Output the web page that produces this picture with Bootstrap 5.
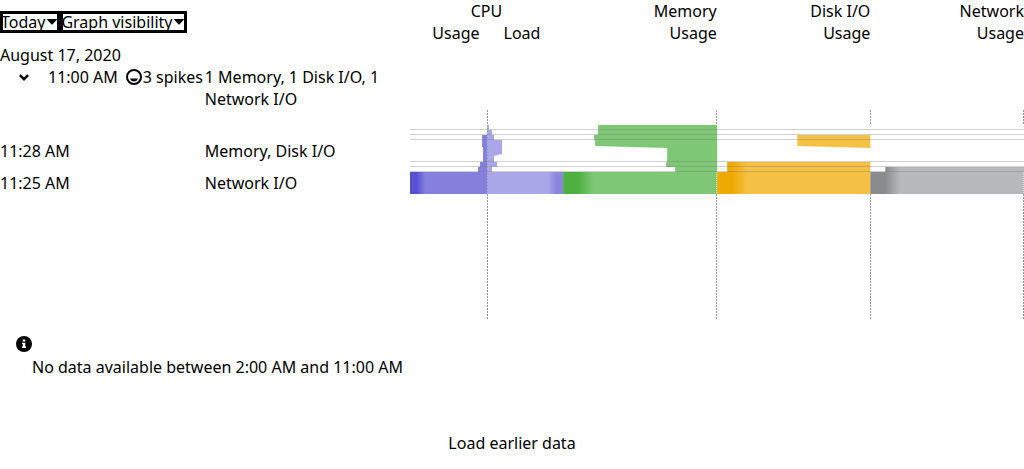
<!DOCTYPE html>
<html lang="en">
<head>
<meta charset="utf-8">
<meta name="viewport" content="width=device-width, initial-scale=1">
<title>Usage history</title>
<link href="https://cdn.jsdelivr.net/npm/bootstrap@5.3.0/dist/css/bootstrap.min.css" rel="stylesheet">
<style>
  body { font-family: "Noto Sans", sans-serif; font-size: 16px; line-height: 22px; color: #000; background: #fff; }
  .label-col { width: 40%; }
  .metrics { width: 60%; }
  .filter { height: 22px; padding: 0 3px 0 1px; border: 0; outline: 3px solid #000; outline-offset: -3px; background: #fff; color: #000; line-height: 22px; white-space: nowrap; }
  .filter svg { margin-left: 2px; }
  .toolbar { padding-top: 11px; height: 44px; }
  .times { width: 50%; }
  .hour-row { height: 61px; }
  .spike-row { height: 32px; padding-top: 5px; }
  .chart-wrap { padding-top: 66px; }
  .chart { height: 209px; width: 100%; }
  .load-more { background: none; border: 0; padding: 0; color: #000; }
  .toggle { width: 48px; height: 20px; padding: 0; border: 0; background: none; line-height: 20px; }
  .notice { padding: 17px 16px 0; }
  .footer-row { margin-top: 54px; }
</style>
</head>
<body>
<main>
  <header class="d-flex">
    <div class="label-col toolbar d-flex align-items-start">
      <button type="button" class="filter d-flex align-items-center">Today<svg width="10" height="6" viewBox="0 0 10 6" aria-hidden="true"><path d="M0 .6Q0 0 .8 0h8.4Q10 0 10 .6L5.6 5.2q-.6.6-1.2 0z"/></svg></button>
      <button type="button" class="filter d-flex align-items-center">Graph visibility<svg width="10" height="6" viewBox="0 0 10 6" aria-hidden="true"><path d="M0 .6Q0 0 .8 0h8.4Q10 0 10 .6L5.6 5.2q-.6.6-1.2 0z"/></svg></button>
    </div>
    <div class="metrics d-flex">
      <div class="w-25 text-center">CPU<div class="d-flex justify-content-center gap-4"><span>Usage</span><span>Load</span></div></div>
      <div class="w-25 text-end">Memory<br>Usage</div>
      <div class="w-25 text-end">Disk I/O<br>Usage</div>
      <div class="w-25 text-end">Network<br>Usage</div>
    </div>
  </header>

  <section class="d-flex align-items-start">
    <div class="label-col">
      <div>August 17, 2020</div>
      <div class="hour-row d-flex">
        <div class="times d-flex align-items-start">
          <button type="button" class="toggle" aria-label="Collapse hour"><svg width="10" height="7" viewBox="0 0 10 7" fill="none" stroke="#000" stroke-width="2.4" aria-hidden="true"><path d="M.9 1.2 5 5.2l4.100-4"/></svg></button>
          <span class="text-nowrap">11:00 AM</span>
          <span class="d-flex align-items-center ms-2 text-nowrap"><svg width="17" height="16" viewBox="0 0 17 16" aria-hidden="true"><circle cx="8" cy="8" r="7" fill="none" stroke="#000" stroke-width="2"/><path d="M4 9.500h8q-1 3-4 3T4 9.500z"/></svg>3 spikes</span>
        </div>
        <div class="times">1 Memory, 1 Disk I/O, 1 Network I/O</div>
      </div>
      <div class="spike-row d-flex mt-2"><div class="times">11:28 AM</div><div class="times">Memory, Disk I/O</div></div>
      <div class="spike-row d-flex"><div class="times">11:25 AM</div><div class="times">Network I/O</div></div>
    </div>
    <div class="metrics chart-wrap">
      <svg class="chart d-block" viewBox="410 110 614 209" preserveAspectRatio="none" role="img" aria-label="CPU, memory, disk and network usage">
        <defs>
          <linearGradient id="cpu" gradientUnits="userSpaceOnUse" x1="417" x2="425" y1="0" y2="0"><stop stop-color="#5651d3"/><stop offset="1" stop-color="#8580dc"/></linearGradient>
          <linearGradient id="load" gradientUnits="userSpaceOnUse" x1="548" x2="556" y1="0" y2="0"><stop stop-color="#aaa7e9"/><stop offset="1" stop-color="#8a86de"/></linearGradient>
          <linearGradient id="mem" gradientUnits="userSpaceOnUse" x1="578" x2="593" y1="0" y2="0"><stop stop-color="#4db040"/><stop offset="1" stop-color="#7dc775"/></linearGradient>
          <linearGradient id="disk" gradientUnits="userSpaceOnUse" x1="732" x2="747" y1="0" y2="0"><stop stop-color="#efaa00"/><stop offset="1" stop-color="#f4c145"/></linearGradient>
          <linearGradient id="net" gradientUnits="userSpaceOnUse" x1="885" x2="900" y1="0" y2="0"><stop stop-color="#888c8e"/><stop offset="1" stop-color="#b6babd"/></linearGradient>
        </defs>
        <path fill="url(#cpu)" d="M487 135h-5v12h1v15h-3v5h-2v5h-68v22h77z"/>
        <path fill="url(#load)" d="M487 125h2v5h3v5h2v5h8v14l-8 2v6h3v5h-5v5h71v22h-76z"/>
        <path fill="url(#mem)" d="M717 125H598v10h-4v5h1v6l72 2v14h-1v5h9v5H563v22h154z"/>
        <path fill="url(#disk)" d="M870 135h-73v11l73 2zM870 162H727v10h-10v22h153z"/>
        <path fill="url(#net)" d="M1024 167H885v5h-15v22h154z"/>
        <g shape-rendering="crispEdges">
          <path stroke="#999" stroke-dasharray="2 1" d="M487.500 110v15M487.500 194v125M716.500 110v15M716.500 194v125M870.500 110v15M870.500 194v125M1023.500 110v15M1023.500 194v125"/>
          <path stroke="#888" stroke-opacity=".6" stroke-dasharray="1 2" d="M487.500 125v69"/>
          <path stroke="#fff" stroke-opacity=".5" stroke-dasharray="1 1" d="M716.500 172v22M1023.500 172v22"/>
          <path stroke="#777" stroke-opacity=".35" d="M410 129.500h614M410 134.500h614M410 139.500h614M410 161.500h614M410 166.500h614M410 171.500h614"/>
        </g>
      </svg>
    </div>
  </section>

  <section class="notice">
    <svg class="d-block" width="16" height="16" viewBox="0 0 16 16" aria-hidden="true"><circle cx="8" cy="8" r="8"/><path fill="#fff" d="M6.700 3.400h2.600v2.200H6.700zM6 6.700h3.300v3.900H10V12H6v-1.400h.8V8.100H6z"/></svg>
    <div class="ms-3 mt-1">No data available between 2:00 AM and 11:00 AM</div>
  </section>
  <div class="footer-row text-center"><button type="button" class="load-more">Load earlier data</button></div>
</main>
<script src="https://cdn.jsdelivr.net/npm/bootstrap@5.3.0/dist/js/bootstrap.bundle.min.js"></script>
</body>
</html>
